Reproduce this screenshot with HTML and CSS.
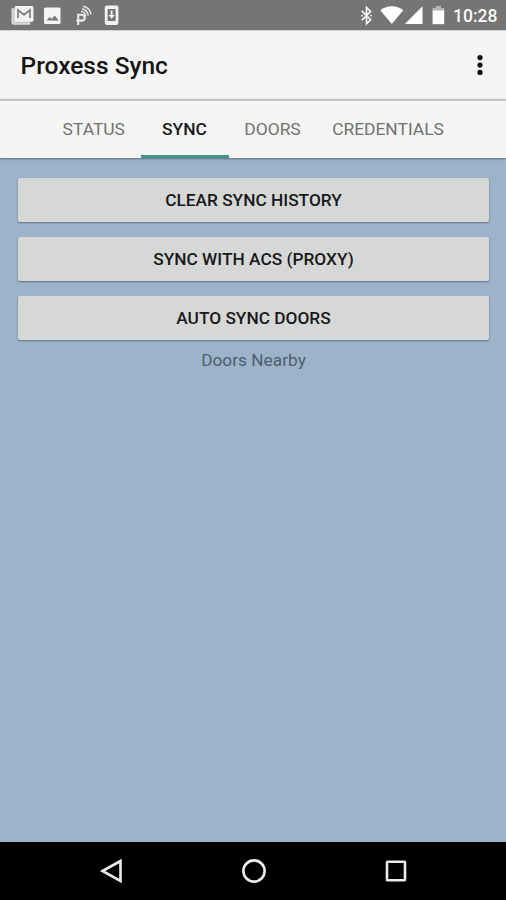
FILE: index.html
```
<!DOCTYPE html>
<html lang="en">
<head>
    <meta charset="UTF-8">
    <meta name="viewport" content="width=device-width, initial-scale=1.0">
    <title>Proxess Sync</title>
    <link rel="stylesheet" href="styles.css">
</head>
<body>

<div class="screen">
    <div class="status-bar">
        <svg class="status-left" width="130" height="30" viewBox="0 0 130 30">
            <!-- mail -->
            <path d="M14 9h-1.8v13.5q0 1.5 1.5 1.5h15.8v-2" fill="#c9c9c9" stroke="#dedede" stroke-width="1.4"/>
            <rect x="14.5" y="6" width="19" height="15.8" rx="1.5" fill="#f2f2f2"/>
            <path d="M18 18V10l6 4.8L30 10v8" fill="none" stroke="#808080" stroke-width="1.8"/>
            <!-- photo -->
            <rect x="44" y="7.5" width="16.5" height="16.5" rx="1.5" fill="#f5f5f5"/>
            <path d="M46.5 20.5l3.2-3.6 2.2 2 2.8-3.4 4 5z" fill="#757575"/>
            <!-- proxess -->
            <path d="M78.2 25V14.8h3.6a2.9 2.9 0 0 1 0 5.8h-5.3" fill="none" stroke="#e9e9e9" stroke-width="2.1"/>
            <path d="M81 11.2a5.6 5.6 0 0 1 4.6 5.3M82 8.7a8 8 0 0 1 6.2 6.9M83 6.2a10 10 0 0 1 8 8.2" fill="none" stroke="#e6e6e6" stroke-width="1.5"/>
            <!-- system update -->
            <rect x="104.8" y="5.5" width="13.6" height="19.5" rx="2" fill="#f2f2f2"/>
            <rect x="107.6" y="9" width="8" height="12" fill="#757575"/>
            <path d="M110.7 10.5h1.8v4.5h2.3l-3.2 3.7-3.2-3.7h2.3z" fill="#f2f2f2"/>
        </svg>
        <svg class="status-right" width="92" height="30" viewBox="0 0 92 30">
            <!-- bluetooth -->
            <path d="M1.8 10.9l8.8 8.9-4.1 4V7.4l4.1 4-8.8 8.9" fill="none" stroke="#fafafa" stroke-width="1.6"/>
            <circle cx="2.2" cy="15.7" r="0.9" fill="#fafafa"/>
            <circle cx="11" cy="15.7" r="0.9" fill="#fafafa"/>
            <!-- wifi -->
            <path d="M31.8 24L20.3 10.2c6.5-5.4 16.5-5.4 23 0z" fill="#fff"/>
            <!-- signal -->
            <path d="M62.5 6.2V24H44.8z" fill="#fff"/>
            <!-- battery -->
            <path d="M75.8 6h5.2v2h3.2v3.3H72.6V8h3.2z" fill="#b5b5b5"/>
            <path d="M72.6 10.5h11.6v13.7H72.6z" fill="#fff"/>
        </svg>
        <span class="clock">10:28</span>
    </div>

    <div class="app-bar">
        <span class="app-title">Proxess Sync</span>
        <svg class="menu-icon" width="8" height="22" viewBox="0 0 8 22">
            <circle cx="4" cy="2.6" r="2.6"/>
            <circle cx="4" cy="10" r="2.6"/>
            <circle cx="4" cy="17.4" r="2.6"/>
        </svg>
    </div>

    <div class="tabs">
        <div class="tab tab-status"><span class="tab-label">STATUS</span></div>
        <div class="tab tab-sync active"><span class="tab-label">SYNC</span></div>
        <div class="tab tab-doors"><span class="tab-label">DOORS</span></div>
        <div class="tab tab-credentials"><span class="tab-label">CREDENTIALS</span></div>
    </div>

    <div class="content">
        <button class="btn">CLEAR SYNC HISTORY</button>
        <button class="btn">SYNC WITH ACS (PROXY)</button>
        <button class="btn">AUTO SYNC DOORS</button>
        <div class="nearby">Doors Nearby</div>
    </div>

    <div class="nav-bar">
        <svg width="26" height="26" viewBox="0 0 26 26">
            <path d="M3.5 13L21.5 3v20z"/>
        </svg>
        <svg width="26" height="26" viewBox="0 0 26 26">
            <circle cx="13" cy="13" r="10.6"/>
        </svg>
        <svg width="26" height="26" viewBox="0 0 26 26">
            <rect x="4" y="3.8" width="18" height="18.5" rx="0.5"/>
        </svg>
    </div>
</div>

</body>
</html>
```
FILE: styles.css
```
body {
    font-family: Roboto, "Liberation Sans", sans-serif;
    margin: 0;
    padding: 0;
    background-color: #9db3c9;
}

.screen {
    display: flex;
    flex-direction: column;
    width: 506px;
    height: 900px;
    overflow: hidden;
}

.status-bar {
    display: flex;
    align-items: center;
    height: 30px;
    background-color: #757575;
}

.status-right {
    margin-left: 230px;
}

.clock {
    margin-left: 1px;
    font-size: 17.5px;
    font-weight: 500;
    line-height: 30px;
    padding-top: 2px;
    color: #fafafa;
}

.app-bar {
    display: flex;
    align-items: center;
    justify-content: space-between;
    box-sizing: border-box;
    height: 69px;
    padding: 1px 22px 0 20.5px;
    border-top: 1px solid #cfcfcf;
    background-color: #f5f5f5;
}

.app-title {
    font-size: 24.5px;
    font-weight: 500;
    color: #161616;
}

.menu-icon {
    fill: #111;
}

.tabs {
    display: flex;
    box-sizing: border-box;
    height: 59px;
    padding-left: 47px;
    border-top: 2px solid #c4c4c4;
    background-color: #f5f5f5;
    box-shadow: 0 1px 2px rgba(40, 65, 80, 0.6);
    z-index: 1;
}

.tab {
    display: flex;
    align-items: center;
    justify-content: center;
    box-sizing: border-box;
    padding-top: 2px;
    border-bottom: 3px solid transparent;
    font-size: 17.4px;
    color: #717171;
    white-space: nowrap;
}

.tab-status {
    width: 93.5px;
}

.tab-sync,
.tab-doors {
    width: 88px;
}

.tab-credentials {
    width: 143px;
}

.tab.active {
    border-bottom-color: #459384;
    font-weight: 500;
    color: #191919;
}

.content {
    display: flex;
    flex: 1;
    flex-direction: column;
    gap: 15px;
    padding: 20px 17px 0 18px;
    background-color: #9db3c9;
}

.btn {
    height: 44px;
    padding: 0;
    border: none;
    border-radius: 2px;
    background-color: #d6d8d7;
    box-shadow: 0 1px 2px rgba(50, 70, 85, 0.6);
    font-family: inherit;
    font-size: 17.3px;
    font-weight: 500;
    color: #191919;
}

.nearby {
    margin-top: -5px;
    text-align: center;
    font-size: 17.3px;
    line-height: 21px;
    color: #4d5f6e;
}

.nav-bar {
    display: flex;
    align-items: center;
    justify-content: center;
    gap: 116px;
    height: 58px;
    padding-left: 2px;
    background-color: #000;
}

.nav-bar svg {
    fill: none;
    stroke: #ececec;
    stroke-width: 2.6;
}
```
